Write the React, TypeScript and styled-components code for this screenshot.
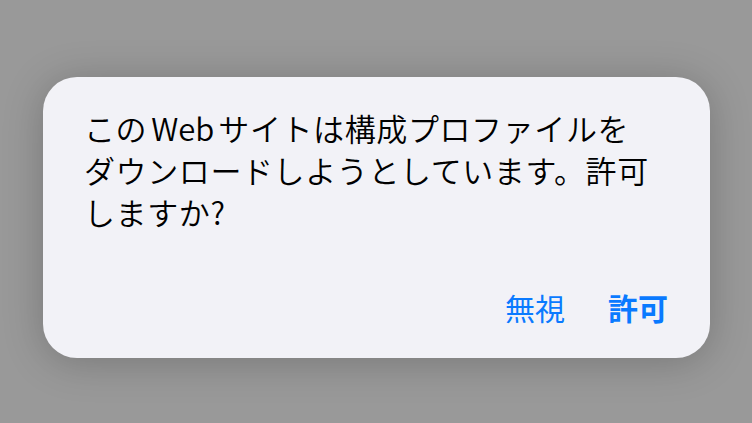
import React from "react";
import styled, { createGlobalStyle } from "styled-components";

const Global = createGlobalStyle`
  html, body { margin: 0; padding: 0; }
  body {
    width: 752px;
    height: 423px;
    overflow: hidden;
    background: #999999;
    font-family: "Noto Sans CJK JP", "Noto Sans", sans-serif;
  }
`;

const Page = styled.div`
  width: 752px;
  height: 423px;
  box-sizing: border-box;
  padding: 77px 0 0 43px;
  background: #999999;
  display: flex;
  align-items: flex-start;
`;

const Dialog = styled.div`
  width: 667px;
  height: 281px;
  box-sizing: border-box;
  background: #f2f2f7;
  border-radius: 34px;
  box-shadow: 0 4px 40px rgba(0, 0, 0, 0.22);
  padding: 30px 42px 0 41px;
  display: flex;
  flex-direction: column;
`;

const Message = styled.p`
  margin: 0;
  font-size: 31px;
  line-height: 42px;
  color: #000000;
  font-weight: 350;
  letter-spacing: 0.6px;
`;

const Latin = styled.span`
  margin: 0 4px;
  letter-spacing: 0;
`;

const Actions = styled.div`
  margin-top: auto;
  margin-bottom: 32px;
  display: flex;
  justify-content: flex-end;
  gap: 43px;
`;

const ActionButton = styled.button<{ $primary?: boolean }>`
  border: none;
  background: none;
  padding: 0;
  font-family: inherit;
  font-size: 30px;
  line-height: 38px;
  color: #0a7aff;
  font-weight: ${(p) => (p.$primary ? 700 : 400)};
  cursor: pointer;
`;

export default function App() {
  return (
    <>
      <Global />
      <Page>
        <Dialog>
          <Message>
            この<Latin>Web</Latin>サイトは構成プロファイルを
            <br />
            ダウンロードしようとしています。許可
            <br />
            しますか?
          </Message>
          <Actions>
            <ActionButton>無視</ActionButton>
            <ActionButton $primary>許可</ActionButton>
          </Actions>
        </Dialog>
      </Page>
    </>
  );
}
